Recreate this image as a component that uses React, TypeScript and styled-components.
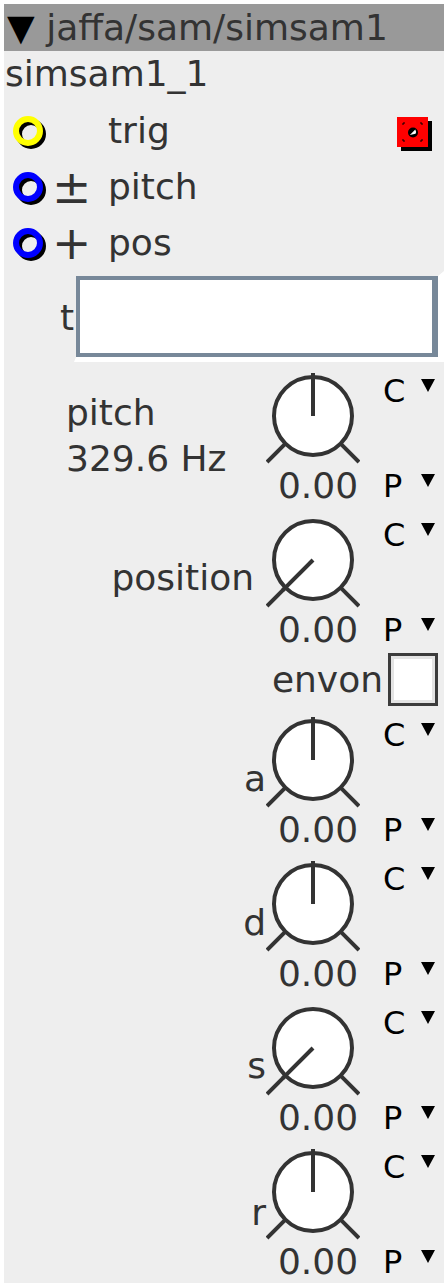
import styled, { createGlobalStyle } from 'styled-components';

const GlobalStyle = createGlobalStyle`
  html, body {
    margin: 0;
    padding: 0;
    background: #ffffff;
  }
  body {
    padding: 4px;
    font-family: "DejaVu Sans", "Liberation Sans", sans-serif;
  }
`;

const INK = '#333333';

const Panel = styled.div`
  width: 440px;
  background: #eeeeee;
  color: ${INK};
  font-size: 36px;
  padding-bottom: 1px;
`;

const Header = styled.div`
  height: 47px;
  line-height: 47px;
  background: #999999;
  padding-left: 3px;
  white-space: nowrap;
`;

const Caret = styled.span`
  color: #000;
`;

const InstanceName = styled.div`
  height: 46px;
  line-height: 46px;
  padding-left: 1px;
`;

const PortList = styled.div`
  display: flex;
  flex-direction: column;
  padding-top: 6px;
`;

const PortRow = styled.div`
  display: flex;
  height: 56px;
  line-height: 56px;
  padding-left: 9px;
`;

const PortRing = styled.svg`
  flex-shrink: 0;
  margin-top: 13px;
`;

const PortSign = styled.span`
  width: 56px;
  margin-left: 5px;
  font-size: 47px;
  flex-shrink: 0;
`;

const PortLabel = styled.span``;

const TrigButton = styled.svg`
  margin-left: auto;
  margin-right: 11px;
  margin-top: 14px;
`;

const Controls = styled.div`
  display: flex;
  flex-direction: column;
  gap: 7px;
`;

const TextRow = styled.div`
  display: flex;
  height: 91px;
`;

const TextLabel = styled.span`
  margin-left: 56px;
  margin-top: 26px;
  line-height: 41px;
`;

const TextFrame = styled.div`
  flex: 1;
  border-style: solid;
  border-width: 5px 6px 5px 2px;
  border-color: #eeeeee #ffffff #ffffff #eeeeee;
  display: flex;
`;

const TextBox = styled.div`
  flex: 1;
  background: #ffffff;
  border-style: solid;
  border-color: #778899;
  border-width: 4px 6px 4px 4px;
`;

const KnobBlock = styled.div`
  display: grid;
  grid-template-columns: 1fr 94px 84px;
  grid-template-rows: 96px 41px;
`;

const KnobLabel = styled.div<{ $top: number; $left?: boolean; $pad?: number }>`
  grid-column: 1;
  grid-row: 1 / 3;
  align-self: start;
  padding-top: ${(p) => p.$top}px;
  text-align: ${(p) => (p.$left ? 'left' : 'right')};
  padding-left: ${(p) => (p.$left ? 62 : 0)}px;
  padding-right: ${(p) => p.$pad ?? 0}px;
  line-height: ${(p) => (p.$left ? 46 : 41)}px;
  white-space: nowrap;
`;

const KnobDial = styled.svg`
  grid-column: 2;
  grid-row: 1;
  display: block;
`;

const KnobValue = styled.div`
  grid-column: 2 / 4;
  grid-row: 2;
  width: 94px;
  padding-left: 5px;
  text-align: center;
  line-height: 41px;
  white-space: nowrap;
`;

const Mode = styled.div<{ $row: number; $pad: number }>`
  grid-column: 3;
  grid-row: ${(p) => p.$row};
  display: flex;
  align-items: flex-start;
  padding-top: ${(p) => p.$pad}px;
  padding-left: 23px;
  font-size: 32px;
  line-height: 35px;
  color: #000;
`;

const ModeLetter = styled.span`
  width: 38px;
  flex-shrink: 0;
`;

const ModeArrow = styled.svg`
  margin-top: 5px;
  flex-shrink: 0;
`;

const ToggleRow = styled.div`
  display: flex;
  justify-content: flex-end;
  align-items: center;
  height: 53px;
  margin-top: -4px;
  padding-right: 6px;
  gap: 5px;
`;

const ToggleBox = styled.div`
  width: 50px;
  height: 53px;
  box-sizing: border-box;
  border: 3px solid #3c3c3c;
  background: #ffffff;
  box-shadow: inset 0 0 0 3px #e4e4e4;
`;

function Ring({ color }: { color: string }) {
  return (
    <PortRing width="34" height="34" viewBox="0 0 34 34">
      <circle cx="18" cy="18" r="12" fill="none" stroke="#000" strokeWidth="6" />
      <circle cx="15" cy="15" r="12" fill="none" stroke={color} strokeWidth="6" />
    </PortRing>
  );
}

function Trig() {
  return (
    <TrigButton width="36" height="36" viewBox="0 0 36 36">
      <rect x="4" y="4" width="31" height="30" fill="#000" />
      <rect x="0" y="0" width="31" height="30" fill="#ff0000" />
      <path d="M6 8V6h2M23 6h2v2M25 22v2h-2M8 24H6v-2" fill="none" stroke="#000" strokeWidth="1" />
      <circle cx="16" cy="15.5" r="5" fill="#000" />
      <path d="M12.8 18 L18.3 12.5 A4.6 4.6 0 0 1 18.6 16.8 Z" fill="#fff" />
    </TrigButton>
  );
}

function Arrow() {
  return (
    <ModeArrow width="14" height="13" viewBox="0 0 14 13">
      <polygon points="0,0 14,0 7,13" fill="#000" />
    </ModeArrow>
  );
}

function Knob({ atMin }: { atMin?: boolean }) {
  const c = 47;
  const d = 27.6;
  const far = 46;
  const tip = atMin ? { x: c - 30.4, y: c + 30.4 } : { x: c, y: 4 };
  return (
    <KnobDial width="94" height="96" viewBox="0 0 94 96">
      <circle cx={c} cy={c} r="39" fill="#fff" stroke={INK} strokeWidth="4" />
      <line x1={c - d} y1={c + d} x2={c - far} y2={c + far} stroke={INK} strokeWidth="4" />
      <line x1={c + d} y1={c + d} x2={c + far} y2={c + far} stroke={INK} strokeWidth="4" />
      <line x1={c} y1={c} x2={tip.x} y2={tip.y} stroke={INK} strokeWidth="4" />
    </KnobDial>
  );
}

type Param = {
  label: string[];
  top: number;
  left?: boolean;
  pad?: number;
  atMin?: boolean;
};

function KnobControl({ label, top, left, pad, atMin }: Param) {
  return (
    <KnobBlock>
      <KnobLabel $top={top} $left={left} $pad={pad}>
        {label.map((l) => (
          <div key={l}>{l}</div>
        ))}
      </KnobLabel>
      <Knob atMin={atMin} />
      <Mode $row={1} $pad={5}>
        <ModeLetter>C</ModeLetter>
        <Arrow />
      </Mode>
      <Mode $row={2} $pad={4}>
        <ModeLetter>P</ModeLetter>
        <Arrow />
      </Mode>
      <KnobValue>0.00</KnobValue>
    </KnobBlock>
  );
}

const envelope: Param[] = [
  { label: ['a'], top: 45 },
  { label: ['d'], top: 45 },
  { label: ['s'], top: 44, atMin: true },
  { label: ['r'], top: 47 },
];

export default function App() {
  return (
    <>
      <GlobalStyle />
      <Panel>
        <Header>
          <Caret>▼</Caret> jaffa/sam/simsam1
        </Header>
        <InstanceName>simsam1_1</InstanceName>
        <PortList>
          <PortRow>
            <Ring color="#ffff00" />
            <PortSign />
            <PortLabel>trig</PortLabel>
            <Trig />
          </PortRow>
          <PortRow>
            <Ring color="#0000ff" />
            <PortSign>±</PortSign>
            <PortLabel>pitch</PortLabel>
          </PortRow>
          <PortRow>
            <Ring color="#0000ff" />
            <PortSign>+</PortSign>
            <PortLabel>pos</PortLabel>
          </PortRow>
        </PortList>
        <Controls>
          <TextRow>
            <TextLabel>t</TextLabel>
            <TextFrame>
              <TextBox />
            </TextFrame>
          </TextRow>
          <KnobControl label={['pitch', '329.6 Hz']} top={21} left />
          <KnobControl label={['position']} top={44} pad={12} atMin />
          <ToggleRow>
            <span>envon</span>
            <ToggleBox />
          </ToggleRow>
          {envelope.map((p) => (
            <KnobControl key={p.label[0]} {...p} />
          ))}
        </Controls>
      </Panel>
    </>
  );
}
